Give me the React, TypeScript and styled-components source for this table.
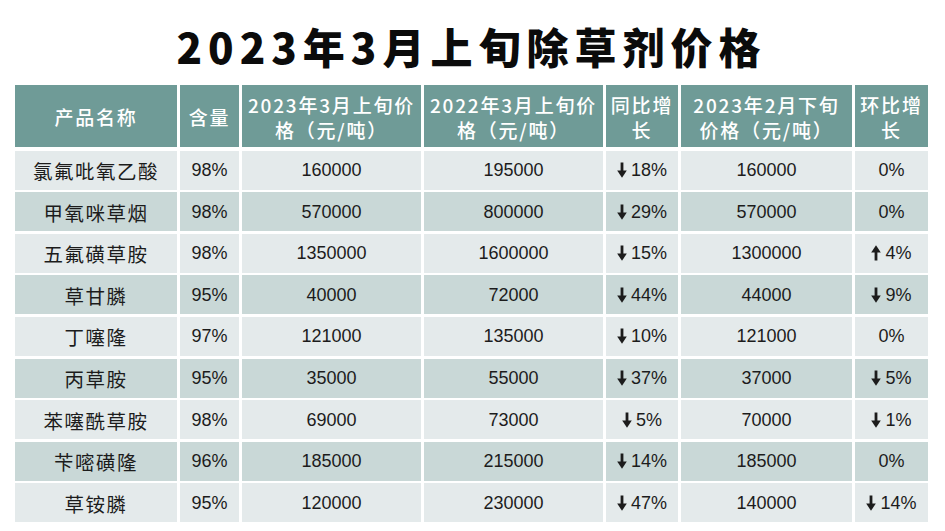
import React from "react";
import styled, { createGlobalStyle } from "styled-components";

const Global = createGlobalStyle`
  html, body { margin: 0; padding: 0; background: #ffffff; }
  body { font-family: "Noto Sans CJK SC", "Noto Sans", sans-serif; }
`;

const Page = styled.div`
  width: 945px;
  height: 531px;
  box-sizing: border-box;
  padding: 0 0 0 15px;
  background: #ffffff;
  display: flex;
  flex-direction: column;
`;

const Title = styled.h1`
  margin: 0;
  height: 85px;
  box-sizing: border-box;
  padding: 20px 17px 0 0;
  text-align: center;
  font-family: "Noto Sans CJK SC", sans-serif;
  font-weight: 900;
  font-size: 42px;
  line-height: 52px;
  letter-spacing: 6px;
  color: #0b0b0b;
`;

const Table = styled.div`
  width: 913px;
  display: flex;
  flex-direction: column;
  gap: 2.6px;
`;

const COLS = "162px 59px 179px 179px 72px 171px 73px";

const Row = styled.div<{ $head?: boolean }>`
  display: grid;
  grid-template-columns: ${COLS};
  column-gap: 3px;
  height: ${(p) => (p.$head ? "62px" : "39px")};
  margin-bottom: ${(p) => (p.$head ? "1px" : "0")};
`;

const HeadCell = styled.div`
  background: #6f9b97;
  color: #ffffff;
  display: flex;
  align-items: center;
  justify-content: center;
  text-align: center;
  font-family: "Noto Sans CJK SC", sans-serif;
  font-weight: 500;
  font-size: 19px;
  line-height: 25px;
  letter-spacing: 1.8px;
  padding-top: 1px;
`;

const Cell = styled.div<{ $dark: boolean; $cjk?: boolean }>`
  background: ${(p) => (p.$dark ? "#c9d8d7" : "#e4eaeb")};
  color: #1c1c1c;
  display: flex;
  align-items: center;
  justify-content: center;
  gap: 4px;
  font-family: ${(p) =>
    p.$cjk
      ? '"Noto Sans CJK SC", sans-serif'
      : '"Liberation Sans", Arial, sans-serif'};
  font-size: ${(p) => (p.$cjk ? "19.5px" : "18px")};
  letter-spacing: ${(p) => (p.$cjk ? "1.5px" : "0")};
  padding-top: 1px;
`;

const ArrowSvg = styled.svg<{ $up?: boolean }>`
  width: 10px;
  height: 16px;
  flex: none;
  margin-top: -1px;
  transform: ${(p) => (p.$up ? "rotate(180deg)" : "none")};
`;

function Arrow({ up }: { up?: boolean }) {
  return (
    <ArrowSvg viewBox="0 0 10 16" $up={up}>
      <rect x="3.6" y="0.5" width="2.8" height="9.5" fill="#1c1c1c" />
      <polygon points="0.2,8.6 9.8,8.6 5,15.8" fill="#1c1c1c" />
    </ArrowSvg>
  );
}

function Change({ v }: { v: string }) {
  if (v.startsWith("-")) {
    return (
      <>
        <Arrow />
        <span>{v.slice(1)}</span>
      </>
    );
  }
  if (v.startsWith("+")) {
    return (
      <>
        <Arrow up />
        <span>{v.slice(1)}</span>
      </>
    );
  }
  return <span>{v}</span>;
}

const head: React.ReactNode[] = [
  "产品名称",
  "含量",
  <>2023年3月上旬价<br />格（元/吨）</>,
  <>2022年3月上旬价<br />格（元/吨）</>,
  <>同比增<br />长</>,
  <>2023年2月下旬<br />价格（元/吨）</>,
  <>环比增<br />长</>,
];

const rows: string[][] = [
  ["氯氟吡氧乙酸", "98%", "160000", "195000", "-18%", "160000", "0%"],
  ["甲氧咪草烟", "98%", "570000", "800000", "-29%", "570000", "0%"],
  ["五氟磺草胺", "98%", "1350000", "1600000", "-15%", "1300000", "+4%"],
  ["草甘膦", "95%", "40000", "72000", "-44%", "44000", "-9%"],
  ["丁噻隆", "97%", "121000", "135000", "-10%", "121000", "0%"],
  ["丙草胺", "95%", "35000", "55000", "-37%", "37000", "-5%"],
  ["苯噻酰草胺", "98%", "69000", "73000", "-5%", "70000", "-1%"],
  ["苄嘧磺隆", "96%", "185000", "215000", "-14%", "185000", "0%"],
  ["草铵膦", "95%", "120000", "230000", "-47%", "140000", "-14%"],
];

export default function App() {
  return (
    <Page>
      <Global />
      <Title>2023年3月上旬除草剂价格</Title>
      <Table>
        <Row $head>
          {head.map((h, i) => (
            <HeadCell key={i}>
              <span>{h}</span>
            </HeadCell>
          ))}
        </Row>
        {rows.map((r, ri) => {
          const dark = ri % 2 === 1;
          return (
            <Row key={ri}>
              <Cell $dark={dark} $cjk>{r[0]}</Cell>
              <Cell $dark={dark}>{r[1]}</Cell>
              <Cell $dark={dark}>{r[2]}</Cell>
              <Cell $dark={dark}>{r[3]}</Cell>
              <Cell $dark={dark}>
                <Change v={r[4]} />
              </Cell>
              <Cell $dark={dark}>{r[5]}</Cell>
              <Cell $dark={dark}>
                <Change v={r[6]} />
              </Cell>
            </Row>
          );
        })}
      </Table>
    </Page>
  );
}
